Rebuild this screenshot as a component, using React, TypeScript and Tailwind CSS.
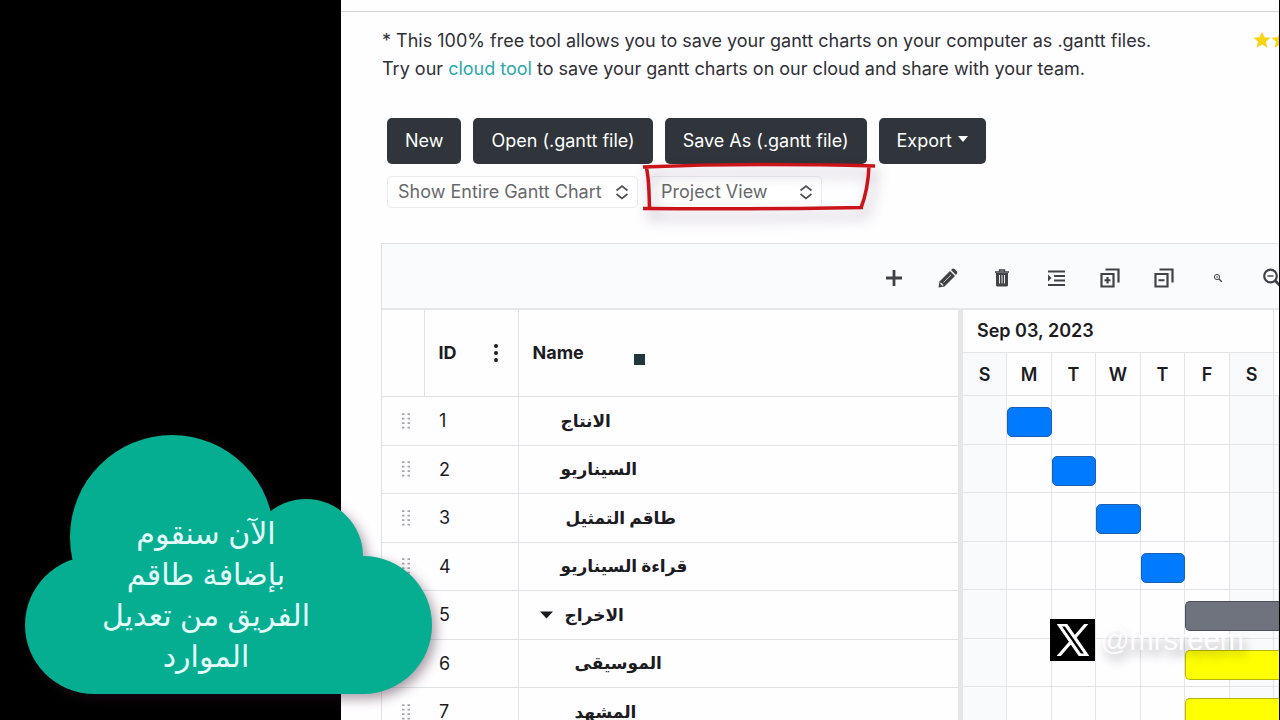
import { useState } from "react";

const FONT = "font-[Inter,'DejaVu_Sans',sans-serif]";

type Task = {
  id: number;
  name: string;
  indent: string;
  parent?: boolean;
  bar: string;
};

const blue = "border-[#1a5fb4] bg-[#007bff]";
const yellow = "border-[#b5b800] bg-[#ffff00]";

const tasks: Task[] = [
  { id: 1, name: "الانتاج", indent: "pl-[42px]", bar: `col-start-2 col-end-3 ${blue}` },
  { id: 2, name: "السيناريو", indent: "pl-[42px]", bar: `col-start-3 col-end-4 ${blue}` },
  { id: 3, name: "طاقم التمثيل", indent: "pl-[47px]", bar: `col-start-4 col-end-5 ${blue}` },
  { id: 4, name: "قراءة السيناريو", indent: "pl-[42px]", bar: `col-start-5 col-end-6 ${blue}` },
  { id: 5, name: "الاخراج", indent: "pl-[21px]", parent: true, bar: "col-start-6 col-end-9 rounded-r-none border-r-0 border-[#4b505a] bg-[#6e737e]" },
  { id: 6, name: "الموسيقى", indent: "pl-[56px]", bar: `col-start-6 col-end-9 rounded-r-none border-r-0 ${yellow}` },
  { id: 7, name: "المشهد", indent: "pl-[56px]", bar: `col-start-6 col-end-9 rounded-r-none border-r-0 ${yellow}` },
];

const days = ["S", "M", "T", "W", "T", "F", "S"];
const dayGrid = "grid grid-cols-[44px_45px_44px_45px_44px_45px_44px_1fr]";
const dayCells = [0, 1, 2, 3, 4, 5, 6, 7];

function rowHeight(index: number) {
  return index % 2 === 0 ? "h-[49px]" : "h-12";
}

function DarkButton({ children }: { children: React.ReactNode }) {
  return (
    <button type="button" className="flex h-[46px] items-center rounded-[5px] bg-[#2f353a] px-[18px] pb-px text-[18px] text-white">
      {children}
    </button>
  );
}

function ViewSelect({ label, options, width }: { label: string; options: string[]; width: string }) {
  const [value, setValue] = useState(options[0]);
  return (
    <div className={`relative ${width}`}>
      <select
        aria-label={label}
        value={value}
        onChange={(event) => setValue(event.target.value)}
        className="h-8 w-full appearance-none rounded-[4px] border border-[#ececf0] bg-white pl-[10px] pr-6 text-[18px] leading-none text-[#68686c]"
      >
        {options.map((option) => (
          <option key={option}>{option}</option>
        ))}
      </select>
      <svg viewBox="0 0 14 16" className="pointer-events-none absolute right-[9px] top-2 h-4 w-[14px]" fill="none" stroke="#505054" strokeWidth="1.7">
        <path d="M1.5 6.5 7 2 12.5 6.5M1.5 10 7 14.5 12.5 10" />
      </svg>
    </div>
  );
}

function ToolButton({ label, children }: { label: string; children: React.ReactNode }) {
  return (
    <button type="button" aria-label={label} className="flex h-10 w-[54px] shrink-0 items-center justify-center text-[#3f4247]">
      <svg viewBox="0 0 20 20" className="h-5 w-5" fill="none" stroke="currentColor" strokeWidth="2">
        {children}
      </svg>
    </button>
  );
}

function Toolbar() {
  return (
    <div className="flex h-[66px] items-center justify-end overflow-hidden border-b-2 border-[#e6e7ea] bg-[#fafbfd]">
      <div className="mr-[-20px] flex pt-[3px]">
        <ToolButton label="Add">
          <path d="M10 2v16M2 10h16" strokeWidth="2.8" />
        </ToolButton>
        <ToolButton label="Edit">
          <path d="M.5 19.5 1.5 13.5 12 3 17 8 6.5 18.5z" fill="currentColor" stroke="none" />
          <path d="M13 2 14.5.8Q15.5.2 16.5 1L19 3.5Q19.8 4.5 19 5.5L18 7z" fill="currentColor" stroke="none" />
          <path d="M5.5 14.5 13 7" stroke="#fafbfd" strokeWidth="0.7" />
          <path d="M2.5 15 5 17.5" stroke="#fafbfd" strokeWidth="1.3" />
        </ToolButton>
        <ToolButton label="Delete">
          <path d="M4 5h12v12q0 1.5-1.5 1.5h-9Q4 18.5 4 17z" fill="currentColor" stroke="none" />
          <path d="M3 4h14M7.5 3.5V2h5v1.5" strokeWidth="1.4" />
          <path d="M7.5 7v8.5M10 7v8.5M12.5 7v8.5" stroke="#fafbfd" strokeWidth="0.9" />
        </ToolButton>
        <ToolButton label="Indent">
          <path d="M2 3.5h17M8 8h11M8 12.5h11M2 17h17" />
          <path d="M2 6.5v7l3.5-3.5z" fill="currentColor" stroke="none" />
        </ToolButton>
        <ToolButton label="Expand all">
          <path d="M1.5 6h12v12.5h-12zM5.5 1.5h13v13M7.5 9v6.5M4.5 12.25h6" strokeWidth="2.2" />
        </ToolButton>
        <ToolButton label="Collapse all">
          <path d="M1.5 6h12v12.5h-12zM5.5 1.5h13v13M4.5 12.25h6" strokeWidth="2.2" />
        </ToolButton>
        <ToolButton label="Zoom in">
          <circle cx="9" cy="9" r="2.6" strokeWidth="1" />
          <path d="m11 11 2.8 2.8" strokeWidth="1.4" />
          <path d="M7.8 9h2.4M9 7.8v2.4" strokeWidth="0.5" />
        </ToolButton>
        <ToolButton label="Zoom out">
          <circle cx="8.5" cy="8" r="6.3" strokeWidth="2.2" />
          <path d="m13 12.5 6 6" strokeWidth="2.8" />
          <path d="M5.5 8h6" strokeWidth="1.4" />
        </ToolButton>
      </div>
    </div>
  );
}

function TaskTable() {
  return (
    <table className="w-[576px] shrink-0 table-fixed border-collapse text-left text-[#1c1c1f]">
      <colgroup>
        <col className="w-[42px]" />
        <col className="w-[94px]" />
        <col />
      </colgroup>
      <thead>
        <tr className="h-[86px] border-b border-[#dfe0e4] text-[18px] font-semibold">
          <th className="border-r border-[#dfe0e4]" aria-label="Reorder" />
          <th className="border-r border-[#dfe0e4] px-[14px]">
            <div className="flex items-center justify-between">
              <span>ID</span>
              <button type="button" aria-label="Column menu" className="flex w-4 flex-col items-center gap-[3px]">
                <span className="h-1 w-1 rounded-full bg-[#1c1c1f]" />
                <span className="h-1 w-1 rounded-full bg-[#1c1c1f]" />
                <span className="h-1 w-1 rounded-full bg-[#1c1c1f]" />
              </button>
            </div>
          </th>
          <th className="pl-[14px]">
            <div className="flex items-center">
              <span>Name</span>
              <span className="ml-[50px] mt-[14px] h-[11px] w-[11px] bg-[#20373b]" />
            </div>
          </th>
        </tr>
      </thead>
      <tbody>
        {tasks.map((task, index) => (
          <tr key={task.id} className={`border-b border-[#e1e2e6] ${rowHeight(index)}`}>
            <td className="p-0">
              <svg viewBox="0 0 10 16" className="ml-[19px] h-4 w-[10px]" fill="#a6a6ab">
                {[1, 5.5, 10, 14.5].map((y) => (
                  <path key={y} d={`M1 ${y - 0.8}h2.5v1.8H1zM6.5 ${y - 0.8}H9v1.8H6.5z`} />
                ))}
              </svg>
            </td>
            <td className="border-r border-[#e1e2e6] p-0 pl-[15px] text-[18px]">{task.id}</td>
            <td className={`p-0 font-bold ${task.indent}`}>
              <div className="flex items-center gap-3">
                {task.parent && (
                  <button type="button" aria-label="Collapse">
                    <svg viewBox="0 0 13 8" className="h-2 w-[13px]" fill="#1c1c1f">
                      <path d="M0 .5h13L6.5 7.5z" />
                    </svg>
                  </button>
                )}
                <span dir="rtl" className="whitespace-nowrap text-[17px] leading-6">{task.name}</span>
              </div>
            </td>
          </tr>
        ))}
      </tbody>
    </table>
  );
}

function Timeline() {
  return (
    <div className="min-w-0 flex-1 overflow-hidden text-[#1c1c1f]">
      <div className="flex h-[43px] border-b border-[#e4e4e8] text-[18px] font-semibold">
        <div className="flex w-[311px] shrink-0 items-center border-r border-[#e4e4e8] pb-px pl-[14px]">Sep 03, 2023</div>
      </div>
      <div className={`${dayGrid} h-[43px] border-b border-[#e4e4e8] text-[18px] font-semibold`}>
        {days.map((day, index) => (
          <div key={index} className={`flex items-center justify-center border-r border-[#e4e4e8] ${index % 6 === 0 ? "bg-[#f8fafb]" : ""}`}>
            {day}
          </div>
        ))}
      </div>
      {tasks.map((task, index) => (
        <div key={task.id} className={`${dayGrid} ${rowHeight(index)} border-b border-[#e4e4e8]`}>
          {dayCells.map((cell) => (
            <div
              key={cell}
              className={`row-start-1 border-r border-[#e4e4e8] ${cell % 6 === 0 || cell === 7 ? "bg-[#f8fafb]" : ""}`}
              style={{ gridColumnStart: cell + 1 }}
            />
          ))}
          <div className={`row-start-1 mt-[11px] h-[30px] rounded-[5px] border ${task.bar}`} />
        </div>
      ))}
    </div>
  );
}

function HighlightBox() {
  return (
    <svg viewBox="0 0 236 50" className="pointer-events-none absolute left-[-8px] top-[-14px] h-[50px] w-[236px] overflow-visible drop-shadow-[4px_8px_7px_rgba(40,30,60,0.35)]" fill="none" stroke="#cb1419" strokeWidth="3.5">
      <path d="M1 5Q60 2.5 120 2.5T233 4M4 4Q7 14 7.5 48M1 46.5Q110 47.5 221 45.5M227 4Q226 28 219 46" />
    </svg>
  );
}

function CloudNote() {
  return (
    <div className="absolute bottom-[26px] left-[25px] h-[259px] w-[407px]">
      <svg viewBox="0 0 407 259" className="absolute inset-0 h-full w-full overflow-visible drop-shadow-[4px_5px_6px_rgba(50,20,40,0.4)]" fill="#05ae91">
        <circle cx="147" cy="102" r="102" />
        <circle cx="281" cy="121" r="57" />
        <circle cx="69" cy="190" r="69" />
        <circle cx="338" cy="190" r="69" />
        <path d="M69 121h269v138H69z" />
      </svg>
      <p dir="rtl" className="relative ml-auto mr-[121px] w-[210px] pt-[78px] text-center text-[30px] leading-[41px] whitespace-nowrap text-[#e6fffa]">
        الآن سنقوم
        <br />
        بإضافة طاقم
        <br />
        الفريق من تعديل
        <br />
        الموارد
      </p>
    </div>
  );
}

function Watermark() {
  return (
    <div className="absolute bottom-[59px] right-[36px] flex items-center gap-[5px]">
      <div className="flex h-[42px] w-[45px] items-center justify-center bg-black">
        <svg viewBox="0 0 24 24" className="h-8 w-8" fill="white" stroke="white" strokeWidth="0.8">
          <path d="M14.234 10.162 22.977 0h-2.072l-7.591 8.824L7.251 0H.258l9.168 13.343L.258 24H2.33l8.016-9.318L16.749 24h6.993zm-2.837 3.299-.929-1.329L3.076 1.56h3.182l5.965 8.532.929 1.329 7.754 11.09h-3.182z" />
        </svg>
      </div>
      <span className="font-['Liberation_Sans',sans-serif] text-[29px] leading-[42px] text-white/90 [text-shadow:3px_7px_10px_rgba(0,0,0,0.3)]">@mrsreem</span>
    </div>
  );
}

export default function App() {
  return (
    <div className={`relative flex h-screen overflow-hidden bg-black ${FONT}`}>
      <aside className="w-[341px] shrink-0 bg-black" />
      <main className="min-w-0 flex-1 overflow-hidden border-r border-black bg-[#fefdff]">
        <div className="h-3 border-b border-[#d2d4da]" />
        <div className="flex justify-between overflow-hidden pl-[41px] pt-[15px]">
          <p className="whitespace-nowrap text-[18px] leading-7 text-[#303035]">
            * This 100% free tool allows you to save your gantt charts on your computer as .gantt files.
            <br />
            Try our <a href="#cloud" className="text-[#2aa9ac]">cloud tool</a> to save your gantt charts on our cloud and share with your team.
          </p>
          <div className="mr-[-10px] flex pt-1" aria-label="Rating">
            {[1, 2].map((star) => (
              <svg key={star} viewBox="0 0 24 24" className="h-[18px] w-[18px]" fill="#f9d412">
                <path d="M12 1l3.3 7.3 8 .8-6 5.3 1.8 7.8L12 18.1l-7.1 4.1 1.8-7.8-6-5.3 8-.8z" />
              </svg>
            ))}
          </div>
        </div>
        <div className="flex gap-3 pl-[46px] pt-[35px]">
          <DarkButton>New</DarkButton>
          <DarkButton>Open (.gantt file)</DarkButton>
          <DarkButton>Save As (.gantt file)</DarkButton>
          <DarkButton>
            Export
            <svg viewBox="0 0 10 6" className="mb-1 ml-[6px] h-[6px] w-[10px]" fill="white">
              <path d="M0 0h10L5 6z" />
            </svg>
          </DarkButton>
        </div>
        <div className="flex gap-3 pl-[46px] pt-3">
          <ViewSelect label="Chart range" options={["Show Entire Gantt Chart", "Show Week"]} width="w-[251px]" />
          <div className="relative">
            <ViewSelect label="View" options={["Project View", "Resource View"]} width="w-[172px]" />
            <HighlightBox />
          </div>
        </div>
        <section className="ml-10 mt-[35px] border-l border-t border-[#dfe0e4] bg-[#fefdff]">
          <Toolbar />
          <div className="flex">
            <TaskTable />
            <div className="w-[5px] shrink-0 bg-[#e4e6e9]" />
            <Timeline />
          </div>
        </section>
      </main>
      <CloudNote />
      <Watermark />
    </div>
  );
}
